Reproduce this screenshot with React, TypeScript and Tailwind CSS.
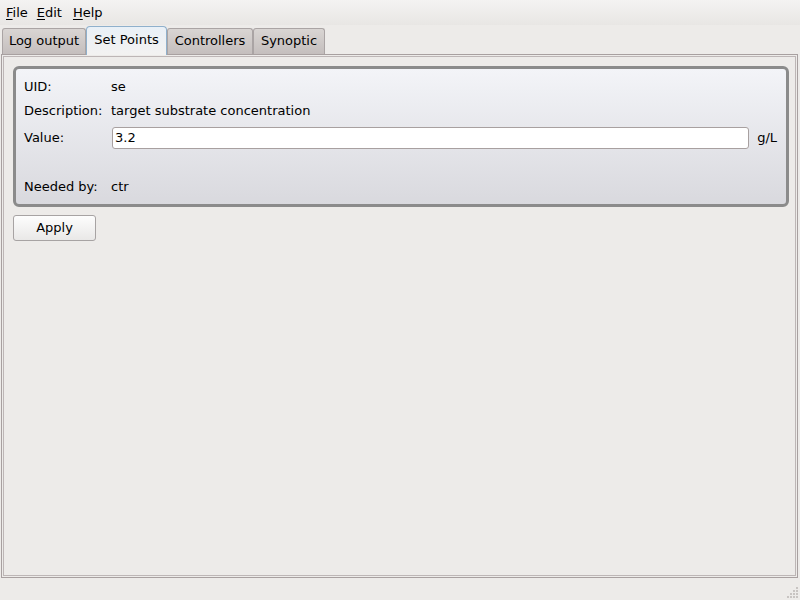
import React from "react";

const font = { fontFamily: '"DejaVu Sans", "Liberation Sans", sans-serif' };

const tabs = [
  { label: "Log output", w: "w-[84px]", active: false },
  { label: "Set Points", w: "w-[81px]", active: true },
  { label: "Controllers", w: "w-[86px]", active: false },
  { label: "Synoptic", w: "w-[72px]", active: false },
];

const Mnemonic = ({ text }: { text: string }) => (
  <span>
    <span className="underline underline-offset-2">{text[0]}</span>
    {text.slice(1)}
  </span>
);

const SizeGrip = () => (
  <svg width="12" height="12" viewBox="0 0 12 12" className="absolute right-[2px] bottom-[2px]">
    {[
      [10, 1], [10, 4], [7, 4], [10, 7], [7, 7], [4, 7], [10, 10], [7, 10], [4, 10], [1, 10],
    ].map(([x, y], i) => (
      <rect key={i} x={x} y={y} width="2" height="2" fill="#c8c4c2" />
    ))}
  </svg>
);

export default function App() {
  return (
    <div style={font} className="w-[800px] h-[600px] bg-[#edebe9] text-[13px] text-black flex flex-col overflow-hidden">
      {/* Menu bar */}
      <div className="h-[25px] flex items-center pl-[6px] bg-gradient-to-b from-[#f4f3f2] to-[#e8e6e4]">
        <span className="mr-[9px]"><Mnemonic text="File" /></span>
        <span className="mr-[11px]"><Mnemonic text="Edit" /></span>
        <span><Mnemonic text="Help" /></span>
      </div>

      {/* Tab bar */}
      <div className="h-[29px] flex items-end pl-[2px]">
        {tabs.map((t) =>
          t.active ? (
            <div
              key={t.label}
              className={`${t.w} h-[29px] -mb-[1px] relative z-10 flex items-center justify-center pb-[3px] rounded-t-[4px] border border-b-0 border-[#8fb0cc] bg-gradient-to-b from-[#e9f0f7] to-[#f3f2f1]`}
            >
              {t.label}
            </div>
          ) : (
            <div
              key={t.label}
              className={`${t.w} h-[26px] flex items-center justify-center pb-[1px] rounded-t-[3px] border border-b-0 border-[#aaa4a4] bg-gradient-to-b from-[#d9d5d3] to-[#c4bebd]`}
            >
              {t.label}
            </div>
          )
        )}
      </div>

      {/* Tab frame */}
      <div className="ml-[1px] mr-[2px] h-[524px] border border-[#a8a0a0] p-[1px]">
        <div className="h-full border border-[#bdb6b6] pl-[9px] pr-[6px] pt-[9px]">
          {/* Group box */}
          <div className="h-[141px] rounded-[6px] border-[3px] border-[#8b8b8b] bg-gradient-to-b from-[#f3f4f8] to-[#d9d9de] pl-[8px] pr-[9px] pt-[6px]">
            <div className="h-[24px] flex items-center">
              <span className="w-[87px]">UID:</span>
              <span>se</span>
            </div>
            <div className="h-[24px] flex items-center">
              <span className="w-[87px]">Description:</span>
              <span>target substrate concentration</span>
            </div>
            <div className="h-[23px] mt-[3px] flex items-center">
              <span className="w-[87px]">Value:</span>
              <input
                readOnly
                value="3.2"
                style={font}
                className="flex-1 ml-[1px] h-[22px] px-[2px] text-[13px] bg-white border border-[#a8a0a0] rounded-[3px] outline-none"
              />
              <span className="ml-[8px]">g/L</span>
            </div>
            <div className="h-[24px] mt-[26px] flex items-center">
              <span className="w-[87px]">Needed by:</span>
              <span>ctr</span>
            </div>
          </div>

          {/* Apply */}
          <button
            style={font}
            className="mt-[8px] w-[83px] h-[26px] text-[13px] rounded-[3px] border border-[#a7a3a3] bg-gradient-to-b from-[#fdfdfd] to-[#e9e8e7] flex items-center justify-center"
          >
            Apply
          </button>
        </div>
      </div>

      {/* Status bar */}
      <div className="flex-1 relative">
        <SizeGrip />
      </div>
    </div>
  );
}
